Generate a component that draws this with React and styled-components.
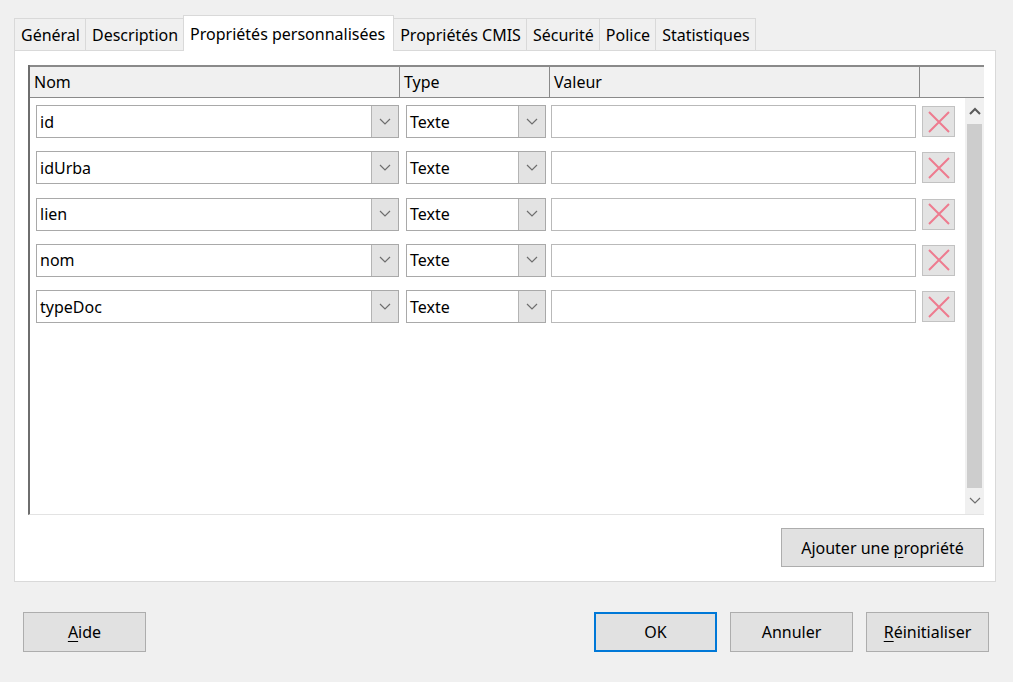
import styled, { createGlobalStyle } from 'styled-components';

const GlobalStyle = createGlobalStyle`
  html, body {
    margin: 0;
    padding: 0;
    background: #f0f0f0;
  }
  body {
    font-family: "Noto Sans", "Open Sans", sans-serif;
    font-size: 16px;
    color: #000;
  }
`;

const Dialog = styled.div`
  width: 1013px;
  height: 682px;
  box-sizing: border-box;
  background: #f0f0f0;
  padding: 15px 17px 0 14px;
  display: flex;
  flex-direction: column;
`;

const TabBar = styled.div`
  display: flex;
  align-items: flex-end;
  height: 35px;
`;

const Tab = styled.div`
  box-sizing: border-box;
  height: ${p => (p.$active ? '36px' : '32px')};
  padding: 0 ${p => (p.$active ? '8px' : '5px')} 0 ${p => (p.$active ? '6px' : '6px')};
  display: flex;
  align-items: center;
  background: ${p => (p.$active ? '#ffffff' : '#f0f0f0')};
  border: 1px solid #d9d9d9;
  border-bottom: none;
  margin-left: -1px;
  margin-bottom: ${p => (p.$active ? '-1px' : '0')};
  position: relative;
  z-index: ${p => (p.$active ? 1 : 0)};
  white-space: nowrap;
  &:first-child {
    margin-left: 0;
  }
`;

const Panel = styled.div`
  box-sizing: border-box;
  height: 532px;
  background: #ffffff;
  border: 1px solid #d9d9d9;
  padding: 14px 11px 0 13px;
  display: flex;
  flex-direction: column;
`;

const TableBox = styled.div`
  height: 450px;
  box-sizing: border-box;
  display: flex;
  flex-direction: column;
  border-left: 2px solid #6e6e6e;
  border-bottom: 1px solid #e3e3e3;
`;

const HeaderRow = styled.div`
  display: flex;
  height: 33px;
  box-sizing: border-box;
  background: #f0f0f0;
  border-top: 2px solid #8a8a8a;
  border-bottom: 1px solid #8a8a8a;
`;

const HeaderCell = styled.div`
  width: ${p => p.$w}px;
  flex: ${p => (p.$grow ? 1 : 'none')};
  box-sizing: border-box;
  padding-left: 4px;
  display: flex;
  align-items: center;
  border-right: ${p => (p.$last ? 'none' : '1px solid #8a8a8a')};
`;

const Body = styled.div`
  flex: 1;
  display: flex;
  background: #ffffff;
`;

const Rows = styled.div`
  flex: 1;
  display: flex;
  flex-direction: column;
  gap: 13.25px;
  padding: 7px 0 0 6px;
`;

const Row = styled.div`
  display: flex;
  align-items: center;
  height: 33px;
`;

const Combo = styled.div`
  box-sizing: border-box;
  width: ${p => p.$w}px;
  height: 33px;
  margin-right: ${p => p.$mr}px;
  display: flex;
  border: 1px solid #a9a9a9;
  background: #ffffff;
`;

const ComboText = styled.div`
  flex: 1;
  display: flex;
  align-items: center;
  padding-left: 3px;
`;

const ComboButton = styled.div`
  width: 26px;
  background: #e3e3e3;
  border-left: 1px solid #b4b4b4;
  display: flex;
  align-items: center;
  justify-content: center;
`;

const TextField = styled.div`
  box-sizing: border-box;
  width: 365px;
  height: 33px;
  border: 1px solid #b9b9b9;
  background: #ffffff;
  margin-right: 6px;
`;

const DeleteButton = styled.div`
  box-sizing: border-box;
  width: 33px;
  height: 31px;
  background: #e3e3e3;
  border: 1px solid #c2c2c2;
  display: flex;
  align-items: center;
  justify-content: center;
`;

const ScrollBar = styled.div`
  width: 19px;
  background: #f0f0f0;
  display: flex;
  flex-direction: column;
  align-items: center;
`;

const ScrollArrow = styled.div`
  height: 26px;
  display: flex;
  align-items: center;
  justify-content: center;
`;

const ScrollThumb = styled.div`
  flex: 1;
  width: 15px;
  background: #cdcdcd;
`;

const PanelFooter = styled.div`
  display: flex;
  justify-content: flex-end;
  padding-top: 13px;
`;

const Button = styled.div`
  box-sizing: border-box;
  width: ${p => p.$w || 123}px;
  height: ${p => p.$h || 40}px;
  background: #e1e1e1;
  border: ${p => (p.$default ? '2px solid #0078d7' : '1px solid #adadad')};
  display: flex;
  align-items: center;
  justify-content: center;
  white-space: nowrap;
  u {
    text-decoration: underline;
    text-underline-offset: 3px;
  }
`;

const Footer = styled.div`
  display: flex;
  align-items: center;
  gap: 13px;
  padding: 30px 7px 0 9px;
`;

const Spacer = styled.div`
  flex: 1;
`;

const Chevron = ({ up }) => (
  <svg width="12" height="8" viewBox="0 0 12 8">
    <path
      d={up ? 'M1 7 L6 2 L11 7' : 'M1 1 L6 6 L11 1'}
      fill="none"
      stroke={up ? '#5a5a5a' : '#6e6e6e'}
      strokeWidth={up ? 2 : 1.2}
    />
  </svg>
);

const Cross = () => (
  <svg width="24" height="24" viewBox="0 0 24 24">
    <path d="M2 2 L22 22 M22 2 L2 22" stroke="#ee7b8f" strokeWidth="2" />
  </svg>
);

const names = ['id', 'idUrba', 'lien', 'nom', 'typeDoc'];
const tabs = [
  'Général',
  'Description',
  'Propriétés personnalisées',
  'Propriétés CMIS',
  'Sécurité',
  'Police',
  'Statistiques',
];

export default function App() {
  return (
    <>
      <GlobalStyle />
      <Dialog>
        <TabBar>
          {tabs.map((t, i) => (
            <Tab key={t} $active={i === 2}>
              {t}
            </Tab>
          ))}
        </TabBar>
        <Panel>
          <TableBox>
            <HeaderRow>
              <HeaderCell $w={370}>Nom</HeaderCell>
              <HeaderCell $w={150}>Type</HeaderCell>
              <HeaderCell $w={370}>Valeur</HeaderCell>
              <HeaderCell $grow $last />
            </HeaderRow>
            <Body>
              <Rows>
                {names.map(n => (
                  <Row key={n}>
                    <Combo $w={363} $mr={7}>
                      <ComboText>{n}</ComboText>
                      <ComboButton>
                        <Chevron />
                      </ComboButton>
                    </Combo>
                    <Combo $w={140} $mr={5}>
                      <ComboText>Texte</ComboText>
                      <ComboButton>
                        <Chevron />
                      </ComboButton>
                    </Combo>
                    <TextField />
                    <DeleteButton>
                      <Cross />
                    </DeleteButton>
                  </Row>
                ))}
              </Rows>
              <ScrollBar>
                <ScrollArrow>
                  <Chevron up />
                </ScrollArrow>
                <ScrollThumb />
                <ScrollArrow>
                  <Chevron />
                </ScrollArrow>
              </ScrollBar>
            </Body>
          </TableBox>
          <PanelFooter>
            <Button $w={203} $h={39}>
              Ajouter une&nbsp;<u>p</u>ropriété
            </Button>
          </PanelFooter>
        </Panel>
        <Footer>
          <Button>
            <u>A</u>ide
          </Button>
          <Spacer />
          <Button $default>OK</Button>
          <Button>Annuler</Button>
          <Button>
            <u>R</u>éinitialiser
          </Button>
        </Footer>
      </Dialog>
    </>
  );
}
